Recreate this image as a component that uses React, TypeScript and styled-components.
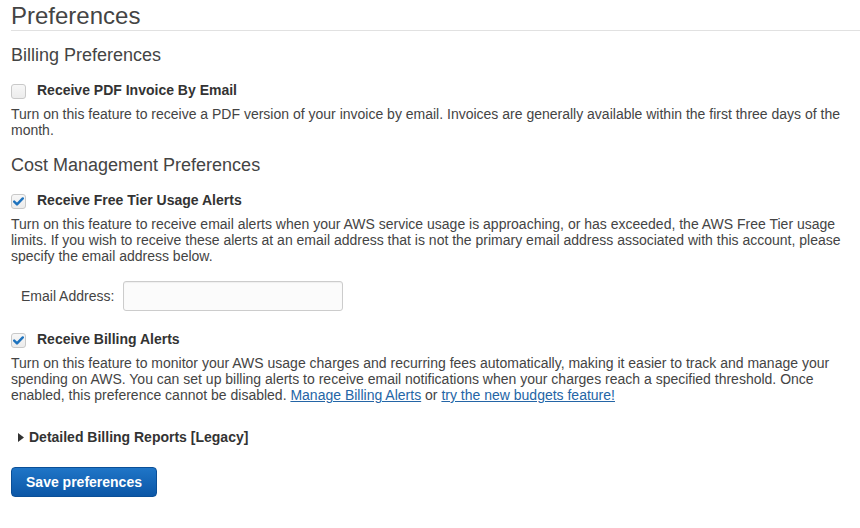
import React from "react";
import styled, { createGlobalStyle } from "styled-components";

const GlobalStyle = createGlobalStyle`
  html, body { margin: 0; padding: 0; background: #ffffff; }
  body { font-family: "Liberation Sans", Arial, sans-serif; color: #444444; }
  * { box-sizing: border-box; }
`;

const Page = styled.div`
  padding: 0 0 0 11px;
  width: 860px;
`;

const Title = styled.h1`
  margin: 0;
  padding-top: 2px;
  font-size: 24px;
  line-height: 28px;
  font-weight: 400;
  color: #444444;
  border-bottom: 1px solid #e1e1e1;
`;

const SectionTitle = styled.h2<{ $top: number }>`
  margin: ${(p) => p.$top}px 0 0 0;
  font-size: 18px;
  line-height: 20px;
  font-weight: 400;
  color: #444444;
`;

const CheckRow = styled.label<{ $top: number }>`
  display: flex;
  align-items: center;
  gap: 11px;
  margin-top: ${(p) => p.$top}px;
  height: 20px;
  font-size: 14px;
  line-height: 20px;
  font-weight: 700;
  color: #333333;
`;

const Box = styled.span`
  display: inline-flex;
  align-items: center;
  justify-content: center;
  width: 15px;
  height: 15px;
  border: 1px solid #c9c9c9;
  border-radius: 3px;
  background: linear-gradient(#f7f7f7, #ececec);
  margin-top: 2px;
`;

const Para = styled.p`
  margin: 6px 0 0 0;
  font-size: 14px;
  line-height: 16px;
  color: #444444;
  padding-right: 8px;
`;

const Link = styled.a`
  color: #2465a6;
  text-decoration: underline;
`;

const FieldRow = styled.div`
  display: flex;
  align-items: center;
  gap: 9px;
  margin-top: 17px;
  padding-left: 10px;
  font-size: 14px;
  color: #444444;
`;

const TextInput = styled.input`
  width: 220px;
  height: 30px;
  border: 1px solid #cccccc;
  border-radius: 3px;
  background: #fbfbfb;
  box-shadow: inset 0 1px 1px rgba(0, 0, 0, 0.05);
  font-family: inherit;
  font-size: 14px;
  padding: 0 8px;
`;

const Expander = styled.div`
  display: flex;
  align-items: center;
  gap: 5px;
  margin-top: 24px;
  padding-left: 7px;
  height: 20px;
  font-size: 14px;
  line-height: 20px;
  font-weight: 700;
  color: #333333;
`;

const Button = styled.button`
  display: block;
  margin-top: 20px;
  width: 146px;
  height: 30px;
  border: 1px solid #0b4f97;
  border-radius: 4px;
  background: linear-gradient(#1f75c7, #0c57a7);
  color: #ffffff;
  font-family: "Liberation Sans", Arial, sans-serif;
  font-size: 14px;
  font-weight: 700;
  padding: 0;
`;

const Check = ({ checked }: { checked: boolean }) => (
  <Box>
    {checked && (
      <svg width="11" height="9" viewBox="0 0 11 9">
        <path d="M1.2 4.6 L4 7.4 L9.8 1.4" fill="none" stroke="#1e73be" strokeWidth="2.4" strokeLinecap="round" strokeLinejoin="round" />
      </svg>
    )}
  </Box>
);

export default function App() {
  return (
    <Page>
      <GlobalStyle />
      <Title>Preferences</Title>

      <SectionTitle $top={14}>Billing Preferences</SectionTitle>
      <CheckRow $top={15}>
        <Check checked={false} />
        Receive PDF Invoice By Email
      </CheckRow>
      <Para>
        Turn on this feature to receive a PDF version of your invoice by email. Invoices are generally available within the first three days of the month.
      </Para>

      <SectionTitle $top={17}>Cost Management Preferences</SectionTitle>
      <CheckRow $top={15}>
        <Check checked={true} />
        Receive Free Tier Usage Alerts
      </CheckRow>
      <Para>
        Turn on this feature to receive email alerts when your AWS service usage is approaching, or has exceeded, the AWS Free Tier usage limits. If you wish to receive these alerts at an email address that is not the primary email address associated with this account, please specify the email address below.
      </Para>
      <FieldRow>
        <span>Email Address:</span>
        <TextInput type="text" />
      </FieldRow>

      <CheckRow $top={18}>
        <Check checked={true} />
        Receive Billing Alerts
      </CheckRow>
      <Para>
        Turn on this feature to monitor your AWS usage charges and recurring fees automatically, making it easier to track and manage your spending on AWS. You can set up billing alerts to receive email notifications when your charges reach a specified threshold. Once enabled, this preference cannot be disabled.{" "}
        <Link href="#">Manage Billing Alerts</Link> or <Link href="#">try the new budgets feature!</Link>
      </Para>

      <Expander>
        <svg width="6" height="9" viewBox="0 0 6 9">
          <path d="M0 0 L6 4.5 L0 9 Z" fill="#333333" />
        </svg>
        Detailed Billing Reports [Legacy]
      </Expander>

      <Button type="button">Save preferences</Button>
    </Page>
  );
}
